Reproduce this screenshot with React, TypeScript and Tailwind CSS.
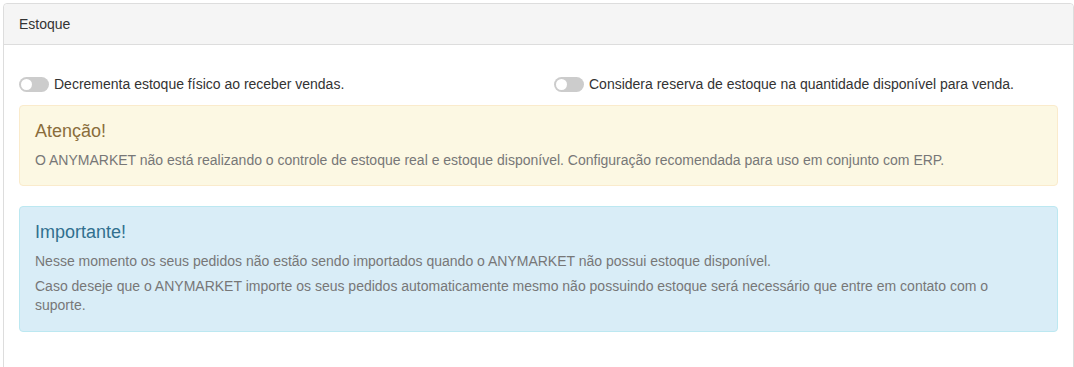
import React from "react";

function Toggle() {
  return (
    <span className="relative inline-block w-[30px] h-[15px] rounded-full bg-[#cccccc] shrink-0">
      <span className="absolute left-[2px] top-[2px] w-[11px] h-[11px] rounded-full bg-white" />
    </span>
  );
}

export default function App() {
  return (
    <div className="bg-white w-[1074px] h-[367px] overflow-hidden pt-[3px] pl-[3px]" style={{ fontFamily: '"Liberation Sans", Arial, sans-serif' }}>
      <div className="border border-[#dddddd] rounded-[4px] h-[370px] text-[#333333]">
        <div className="h-[41px] bg-[#f5f5f5] border-b border-[#dddddd] px-[15px] flex items-center text-[14px] rounded-t-[4px]">
          Estoque
        </div>
        <div className="px-[15px] pt-[31px]">
          <div className="flex">
            <div className="w-[535px] flex items-center gap-[5px] text-[14px] h-[16px]">
              <Toggle />
              <span>Decrementa estoque físico ao receber vendas.</span>
            </div>
            <div className="flex items-center gap-[5px] text-[14px] h-[16px]">
              <Toggle />
              <span>Considera reserva de estoque na quantidade disponível para venda.</span>
            </div>
          </div>
          <div className="mt-[13px] bg-[#fcf8e3] border border-[#faebcc] rounded-[4px] p-[15px]">
            <div className="text-[18px] leading-[20px] text-[#8a6d3b]">Atenção!</div>
            <p className="mt-[9px] text-[14px] leading-[20px] text-[#777777]">
              O ANYMARKET não está realizando o controle de estoque real e estoque disponível. Configuração recomendada para uso em conjunto com ERP.
            </p>
          </div>
          <div className="mt-[20px] bg-[#d9edf7] border border-[#bce8f1] rounded-[4px] p-[15px] pb-[16px]">
            <div className="text-[18px] leading-[20px] text-[#31708f]">Importante!</div>
            <p className="mt-[9px] text-[14px] leading-[20px] text-[#777777]">
              Nesse momento os seus pedidos não estão sendo importados quando o ANYMARKET não possui estoque disponível.
            </p>
            <p className="mt-[6px] text-[14px] leading-[19px] text-[#777777]">
              Caso deseje que o ANYMARKET importe os seus pedidos automaticamente mesmo não possuindo estoque será necessário que entre em contato com o suporte.
            </p>
          </div>
        </div>
      </div>
    </div>
  );
}
